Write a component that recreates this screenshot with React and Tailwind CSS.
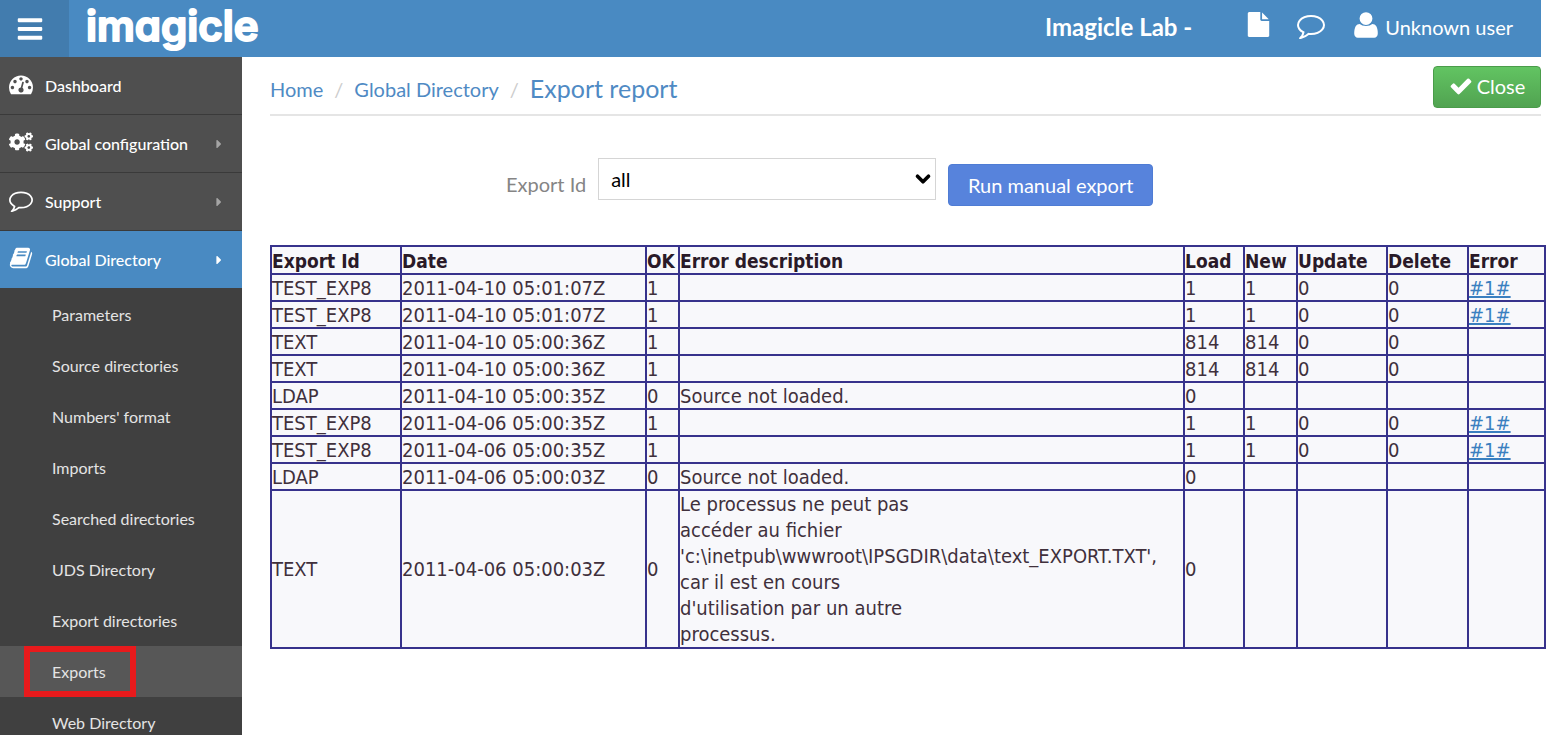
import React, { useState } from 'react';
import { FaBars, FaCaretRight, FaCogs } from 'react-icons/fa';
import { ChevronDown } from 'lucide-react';

const PATHS = {
    dashboard: 'M384 1152q0-53-37.5-90.5t-90.5-37.5-90.5 37.5-37.5 90.5 37.5 90.5 90.5 37.5 90.5-37.5 37.5-90.5zm192-448q0-53-37.5-90.5t-90.5-37.5-90.5 37.5-37.5 90.5 37.5 90.5 90.5 37.5 90.5-37.5 37.5-90.5zm428 481l101-382q6-26-7.5-48.5t-38.5-29.5-48 6.5-30 39.5l-101 382q-60 5-107 43.5t-63 98.5q-20 77 20 146t117 89 146-20 89-117q16-60-6-117t-72-91zm660-33q0-53-37.5-90.5t-90.5-37.5-90.5 37.5-37.5 90.5 37.5 90.5 90.5 37.5 90.5-37.5 37.5-90.5zm-640-640q0-53-37.5-90.5t-90.5-37.5-90.5 37.5-37.5 90.5 37.5 90.5 90.5 37.5 90.5-37.5 37.5-90.5zm448 192q0-53-37.5-90.5t-90.5-37.5-90.5 37.5-37.5 90.5 37.5 90.5 90.5 37.5 90.5-37.5 37.5-90.5zm320 448q0 261-141 483-19 29-54 29h-1402q-35 0-54-29-141-221-141-483 0-182 71-348t191-286 286-191 348-71 348 71 286 191 191 286 71 348z',
    comment: 'M896 384q-204 0-381.5 69.5t-282 187.5-104.5 255q0 112 71.5 213.5t201.5 175.5l87 50-27 96q-24 91-70 172 152-63 275-171l43-38 57 6q69 8 130 8 204 0 381.5-69.5t282-187.5 104.5-255-104.5-255-282-187.5-381.5-69.5zm896 512q0 174-120 321.5t-326 233-450 85.5q-70 0-145-8-198 175-460 242-49 14-114 22h-5q-15 0-27-10.5t-16-27.5v-1q-3-4-.5-12t2-10 4.5-9.5l6-9 7-8.5 8-9q7-8 31-34.5t34.5-38 31-39.5 32.5-51 27-59 26-76q-157-89-247.5-220t-90.5-281q0-174 120-321.5t326-233 450-85.5 450 85.5 326 233 120 321.5z',
    book: 'M1703 478q40 57 18 129l-275 906q-19 64-76.5 107.5t-122.5 43.5h-923q-77 0-148.5-53.5t-99.5-131.5q-24-67-2-127 0-4 3-27t4-37q1-8-3-21.5t-3-19.5q2-11 8-21t16.5-23.5 16.5-23.5q23-38 45-91.5t30-91.5q3-10 .5-30t-.5-28q3-11 17-28t17-23q21-36 42-92t25-90q1-9-2.5-32t.5-28q4-13 22-30.5t22-22.5q19-26 42.5-84.5t27.5-96.5q1-8-3-25.5t-2-26.5q2-8 9-18t18-23 17-21q8-12 16.5-30.5t15-35 16-36 19.5-32 26.5-23.5 36-11.5 47.5 5.5l-1 3q38-9 51-9h761q74 0 114 56t18 130l-274 906q-36 119-71.5 153.5t-128.5 34.5h-869q-27 0-38 15-11 16-1 43 24 70 144 70h923q29 0 56-15.5t35-41.5l300-987q7-22 5-57 38 15 59 43zm-1064 2q-4 13 2 22.5t20 9.5h608q13 0 25.5-9.5t16.5-22.5l21-64q4-13-2-22.5t-20-9.5h-608q-13 0-25.5 9.5t-16.5 22.5zm-83 256q-4 13 2 22.5t20 9.5h608q13 0 25.5-9.5t16.5-22.5l21-64q4-13-2-22.5t-20-9.5h-608q-13 0-25.5 9.5t-16.5 22.5z',
    user: 'M1600 1399q0 109-62.5 187t-150.5 78h-982q-88 0-150.5-78t-62.5-187q0-85 8.5-160.5t31.5-152 58.5-131 94-89 134.5-34.5q131 128 377 128t377-128q76 0 134.5 34.5t94 89 58.5 131 31.5 152 8.5 160.5zm-320-887q0 159-112.5 271.5t-271.5 112.5-271.5-112.5-112.5-271.5 112.5-271.5 271.5-112.5 271.5 112.5 112.5 271.5z',
    file: 'M1152 512v-472q22 14 36 28l408 408q14 14 28 36h-472zm-128 32q0 40 28 68t68 28h544v1056q0 40-28 68t-68 28h-1344q-40 0-68-28t-28-68v-1600q0-40 28-68t68-28h800v544z',
    check: 'M1671 566q0 40-28 68l-724 724-136 136q-28 28-68 28t-68-28l-136-136-362-362q-28-28-28-68t28-68l136-136q28-28 68-28t68 28l294 295 656-657q28-28 68-28t68 28l136 136q28 28 28 68z',
};

function Icon({ name, className }) {
    return (
        <svg viewBox="0 0 1792 1792" fill="currentColor" className={className} aria-hidden="true">
            <path d={PATHS[name]} />
        </svg>
    );
}

const MENU = [
    { label: 'Dashboard', icon: 'dashboard' },
    { label: 'Global configuration', icon: 'cogs', arrow: true },
    { label: 'Support', icon: 'comment', arrow: true },
    { label: 'Global Directory', icon: 'book', arrow: true, active: true },
];

const SUBMENU = [
    'Parameters',
    'Source directories',
    "Numbers' format",
    'Imports',
    'Searched directories',
    'UDS Directory',
    'Export directories',
    'Exports',
    'Web Directory',
];

const COLUMNS = [
    { label: 'Export Id', width: 'w-[130px]' },
    { label: 'Date', width: 'w-[245px]' },
    { label: 'OK', width: 'w-[33px]' },
    { label: 'Error description', width: '' },
    { label: 'Load', width: 'w-[60px]' },
    { label: 'New', width: 'w-[53px]' },
    { label: 'Update', width: 'w-[90px]' },
    { label: 'Delete', width: 'w-[81px]' },
    { label: 'Error', width: 'w-[77px]' },
];

const LONG_ERROR = `Le processus ne peut pas
accéder au fichier
'c:\\inetpub\\wwwroot\\IPSGDIR\\data\\text_EXPORT.TXT',
car il est en cours
d'utilisation par un autre
processus.`;

const ROWS = [
    ['TEST_EXP8', '2011-04-10 05:01:07Z', '1', '', '1', '1', '0', '0', '#1#'],
    ['TEST_EXP8', '2011-04-10 05:01:07Z', '1', '', '1', '1', '0', '0', '#1#'],
    ['TEXT', '2011-04-10 05:00:36Z', '1', '', '814', '814', '0', '0', ''],
    ['TEXT', '2011-04-10 05:00:36Z', '1', '', '814', '814', '0', '0', ''],
    ['LDAP', '2011-04-10 05:00:35Z', '0', 'Source not loaded.', '0', '', '', '', ''],
    ['TEST_EXP8', '2011-04-06 05:00:35Z', '1', '', '1', '1', '0', '0', '#1#'],
    ['TEST_EXP8', '2011-04-06 05:00:35Z', '1', '', '1', '1', '0', '0', '#1#'],
    ['LDAP', '2011-04-06 05:00:03Z', '0', 'Source not loaded.', '0', '', '', '', ''],
    ['TEXT', '2011-04-06 05:00:03Z', '0', LONG_ERROR, '0', '', '', '', ''],
];

function Header() {
    return (
        <header className="mr-1.5 flex h-[57px] shrink-0 items-center bg-[#498ac2] text-white">
            <button aria-label="Toggle menu" className="flex h-full w-[69px] items-center bg-[#427cae] pl-4">
                <FaBars size={28} />
            </button>
            <svg viewBox="0 0 200 57" className="ml-4 h-[57px] w-[200px]" role="img" aria-label="imagicle">
                <text
                    x="1"
                    y="41"
                    fontFamily="Inter, sans-serif"
                    fontSize="42"
                    fontWeight="600"
                    fill="white"
                    stroke="white"
                    strokeWidth="2"
                    strokeLinejoin="round"
                    style={{ fontFeatureSettings: '"cv11"' }}
                >
                    imagicle
                </text>
            </svg>
            <div className="ml-auto flex items-center pr-7 pb-1">
                <span className="mr-[54px] text-2xl font-bold">Imagicle Lab -</span>
                <a href="#file" aria-label="Documents" className="mr-[26px] pb-1">
                    <Icon name="file" className="h-[25px] w-[25px]" />
                </a>
                <a href="#chat" aria-label="Messages" className="mr-[26px]">
                    <Icon name="comment" className="-mt-1 h-7 w-7" />
                </a>
                <a href="#user" className="flex items-center gap-1 text-xl">
                    <Icon name="user" className="-mt-1 h-[30px] w-[30px]" />
                    Unknown user
                </a>
            </div>
        </header>
    );
}

function Sidebar() {
    return (
        <nav className="w-[242px] shrink-0 overflow-hidden bg-[#404040] text-white">
            {MENU.map((item) => (
                <a
                    key={item.label}
                    href="#menu"
                    className={`flex h-[58px] items-center border-b pr-4 pl-[9px] text-base font-medium ${item.active ? 'border-[#404040] bg-[#498ac2]' : 'border-[#3a3a3a] bg-[#4f4f4f]'}`}
                >
                    <span className="pb-1">
                        {item.icon === 'cogs' ? <FaCogs size={24} /> : <Icon name={item.icon} className="h-6 w-6" />}
                    </span>
                    <span className="ml-3">{item.label}</span>
                    {item.arrow && (
                        <FaCaretRight size={14} className={`ml-auto ${item.active ? 'text-white' : 'text-[#a5a5a5]'}`} />
                    )}
                </a>
            ))}
            <ul className="text-base text-[#e4e4e4]">
                {SUBMENU.map((label) =>
                    label === 'Exports' ? (
                        <li key={label} className="bg-[#575757] pl-6">
                            <a href="#exports" className="flex h-[51px] w-28 items-center border-6 border-[#e81a1c] pl-[22px]">
                                {label}
                            </a>
                        </li>
                    ) : (
                        <li key={label}>
                            <a href="#submenu" className="flex h-[51px] items-center pl-[52px]">
                                {label}
                            </a>
                        </li>
                    )
                )}
            </ul>
        </nav>
    );
}

function ReportTable() {
    return (
        <table className="mt-[39px] w-full table-fixed border-collapse bg-[#f8f8fb] text-left font-['DejaVu_Sans_Condensed','DejaVu_Sans',sans-serif] text-xl text-[#40303c]">
            <thead>
                <tr className="h-7">
                    {COLUMNS.map((col) => (
                        <th key={col.label} className={`border-2 border-[#37328c] pt-0.5 text-[19px] leading-6 font-bold whitespace-nowrap text-[#2a1a28] ${col.width}`}>
                            {col.label}
                        </th>
                    ))}
                </tr>
            </thead>
            <tbody>
                {ROWS.map((row, i) => (
                    <tr key={i} className={row[3] === LONG_ERROR ? 'leading-[26px]' : 'leading-[23px]'}>
                        {row.map((cell, j) => (
                            <td key={j} className={`border-2 border-[#37328c] align-middle whitespace-pre ${row[3] === LONG_ERROR ? '' : 'pt-0.5'}`}>
                                {j === 8 && cell ? <a href="#error" className="text-[#3a7fc0] underline">{cell}</a> : cell}
                            </td>
                        ))}
                    </tr>
                ))}
            </tbody>
        </table>
    );
}

export default function App() {
    const [exportId, setExportId] = useState('all');

    return (
        <div className="flex h-screen flex-col overflow-hidden bg-white font-[Lato,sans-serif]">
            <Header />
            <div className="flex min-h-0 flex-1">
                <Sidebar />
                <main className="min-w-0 flex-1 pr-px pl-7">
                    <div className="mr-[5px] flex h-[59px] items-center border-b-2 border-[#e5e5e5] pt-0.5">
                        <div className="flex items-center gap-[11px] pt-1 text-xl text-[#4f8ac4]">
                            <a href="#home">Home</a>
                            <span className="text-[#cccccc]">/</span>
                            <a href="#directory">Global Directory</a>
                            <span className="text-[#cccccc]">/</span>
                            <h1 className="text-[25px]">Export report</h1>
                        </div>
                        <button className="ml-auto flex h-[42px] w-[108px] items-center justify-center gap-1 rounded-sm border border-[#4a9c4a] bg-linear-to-b from-[#62c462] to-[#51a351] pb-0.5 text-xl text-white">
                            <Icon name="check" className="h-6 w-6" />
                            Close
                        </button>
                    </div>
                    <div className="mt-[42px] flex items-start pl-[236px]">
                        <label htmlFor="export-id" className="mt-3 mr-3 text-xl text-[#858585]">
                            Export Id
                        </label>
                        <div className="relative">
                            <select
                                id="export-id"
                                value={exportId}
                                onChange={(e) => setExportId(e.target.value)}
                                className="h-[42px] w-[338px] appearance-none border border-[#d5d5d5] bg-white pl-3 text-xl text-black"
                            >
                                <option value="all">all</option>
                            </select>
                            <ChevronDown size={22} strokeWidth={4} className="pointer-events-none absolute top-2.5 right-0.5 text-black" />
                        </div>
                        <button className="mt-1.5 ml-3 h-[42px] w-[205px] rounded-sm border border-[#4f7cd4] bg-[#5783dc] text-xl text-white">
                            Run manual export
                        </button>
                    </div>
                    <ReportTable />
                </main>
            </div>
        </div>
    );
}
